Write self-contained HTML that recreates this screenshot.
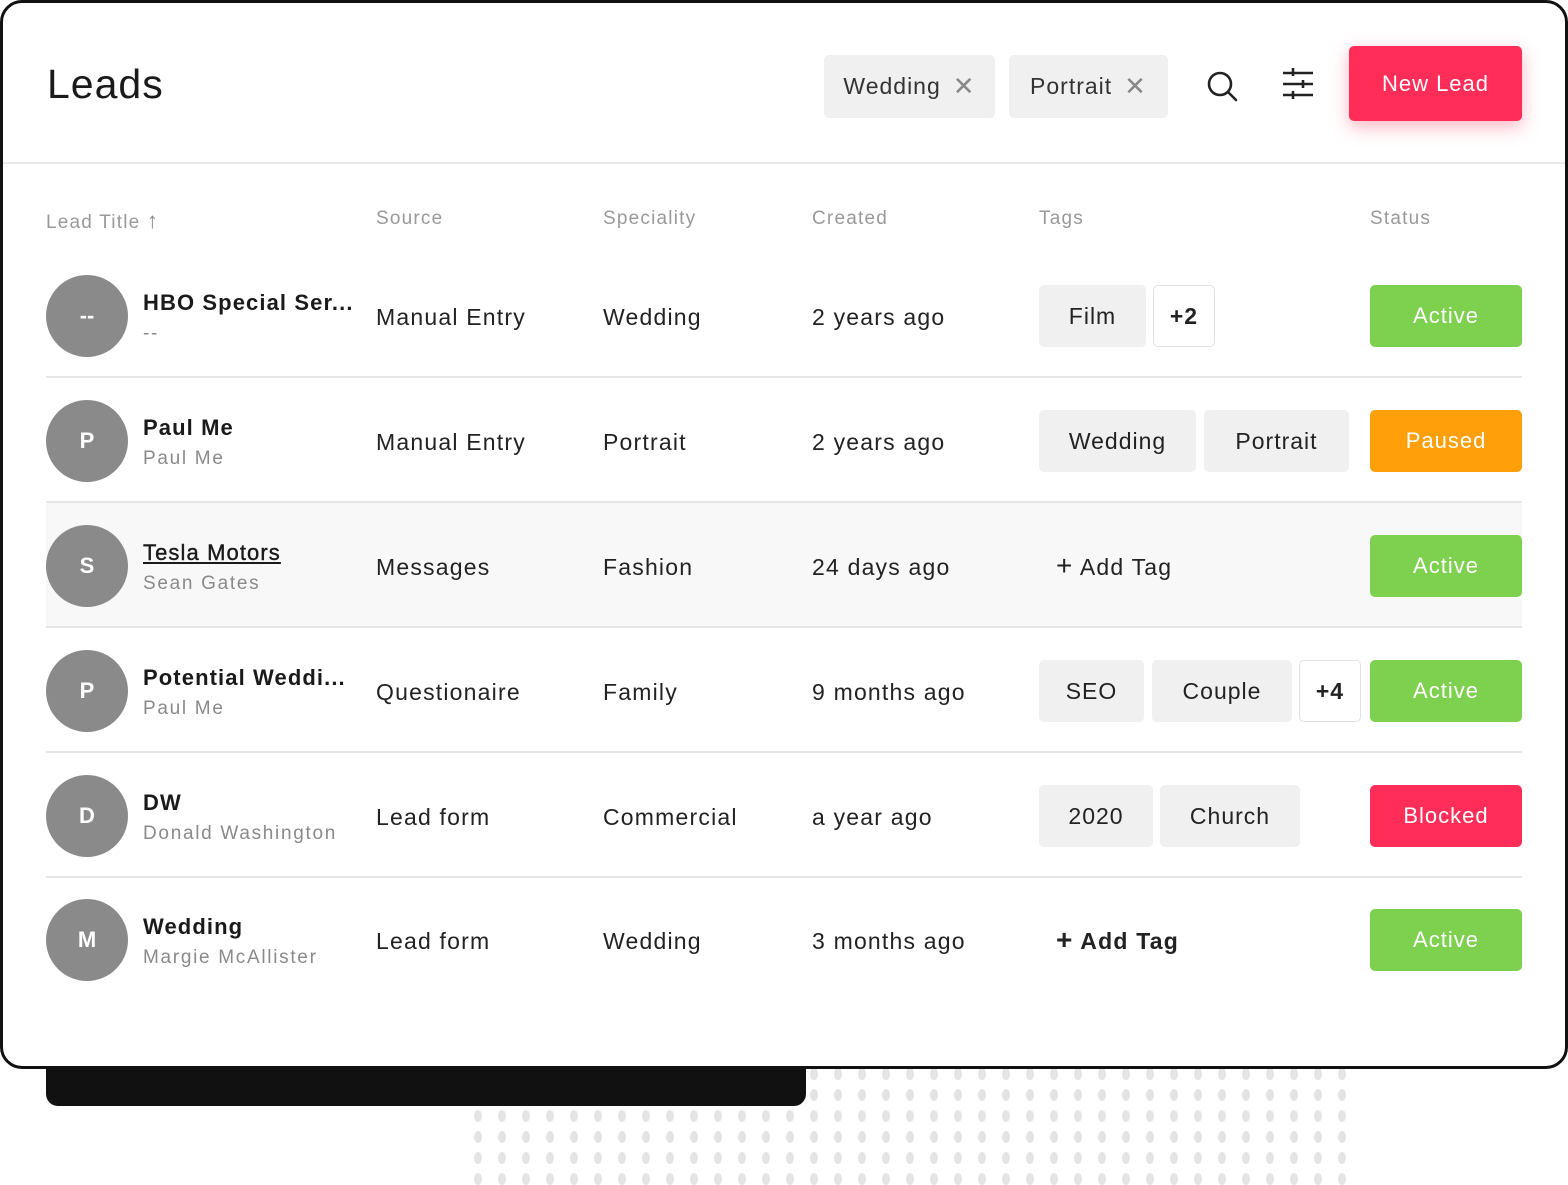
<!DOCTYPE html>
<html><head><meta charset="utf-8"><style>
*{margin:0;padding:0;box-sizing:border-box}
body{width:1568px;height:1185px;background:#fff;position:relative;overflow:hidden;font-family:"Liberation Sans",sans-serif;color:#1a1a1a}
.a{position:absolute}
.card{left:0;top:0;width:1568px;height:1069px;border:3px solid #111;border-radius:22px;background:#fff;z-index:2}
.tab{left:46px;top:1060px;width:760px;height:46px;background:#111;border-radius:0 0 12px 12px;z-index:1}
.dot{position:absolute;width:8px;height:12px;border-radius:50%;background:#e4e4e4}
.chip{background:#f0f0f0;border-radius:5px;height:63px;top:52px;font-size:23px;color:#333;display:flex;align-items:center;justify-content:center;gap:12px;letter-spacing:1px}
.th{top:208px;font-size:19px;color:#999;letter-spacing:1.2px}
.av{width:82px;height:82px;border-radius:50%;background:#8a8a8a;color:#fff;font-weight:bold;font-size:22px;display:flex;align-items:center;justify-content:center;left:46px}
.nm{left:143px;font-size:22px;font-weight:bold;color:#1a1a1a;letter-spacing:1.1px}
.sb{left:143px;font-size:19px;color:#8a8a8a;letter-spacing:1.7px}
.cell{font-size:23px;color:#222;letter-spacing:1.2px}
.tag{height:62px;border-radius:5px;background:#f0f0f0;display:flex;align-items:center;justify-content:center;font-size:23px;color:#222;letter-spacing:1px}
.plus{background:#fff;border:1.5px solid #e2e2e2;font-weight:bold}
.st{left:1370px;width:152px;height:62px;border-radius:5px;color:#fff;font-size:22px;display:flex;align-items:center;justify-content:center;letter-spacing:1px}
.g{background:#7ed04f}.o{background:#ffa00a}.r{background:#ff2d57}
.hr{left:46px;width:1476px;height:2px;background:#e6e6e6}
</style></head><body>
<div id="dots"></div>
<div class="a tab"></div>
<div class="a card">
<div class="a" style="left:44px;top:58px;font-size:41px;color:#1a1a1a;letter-spacing:1px">Leads</div>
<div class="a chip" style="left:821px;width:171px">Wedding <span style="color:#888;font-size:26px">✕</span></div>
<div class="a chip" style="left:1006px;width:159px">Portrait <span style="color:#888;font-size:26px">✕</span></div>
<svg class="a" style="left:1201px;top:65px" width="36" height="36" viewBox="0 0 36 36" fill="none" stroke="#222" stroke-width="2.6"><circle cx="16" cy="16" r="11"/><line x1="24" y1="24" x2="32" y2="32" stroke-linecap="round"/></svg>
<svg class="a" style="left:1278px;top:64px" width="34" height="34" viewBox="0 0 34 34" stroke="#222" stroke-width="2.6"><line x1="2" y1="6" x2="32" y2="6"/><line x1="12" y1="1" x2="12" y2="9"/><line x1="2" y1="17" x2="32" y2="17"/><line x1="22" y1="13" x2="22" y2="21"/><line x1="2" y1="28" x2="32" y2="28"/><line x1="12" y1="24" x2="12" y2="32"/></svg>
<div class="a" style="left:1346px;top:43px;width:173px;height:75px;background:#ff2d57;border-radius:5px;color:#fff;font-size:22px;display:flex;align-items:center;justify-content:center;box-shadow:0 6px 18px rgba(255,45,87,.35);letter-spacing:1px">New Lead</div>
<div class="a" style="left:0;top:159px;width:1562px;height:2px;background:#e8e8e8"></div>
</div>
<div class="a" style="left:0;top:0;width:1568px;height:1069px;z-index:3">
<div class="a th" style="left:46px">Lead Title <span style="font-size:22px;font-weight:bold;color:#888">↑</span></div>
<div class="a th" style="left:376px">Source</div>
<div class="a th" style="left:603px">Speciality</div>
<div class="a th" style="left:812px">Created</div>
<div class="a th" style="left:1039px">Tags</div>
<div class="a th" style="left:1370px">Status</div>

<div class="a" style="left:46px;top:503px;width:1476px;height:124px;background:#f8f8f8"></div>
<div class="a hr" style="top:376px"></div>
<div class="a hr" style="top:501px"></div>
<div class="a hr" style="top:626px"></div>
<div class="a hr" style="top:751px"></div>
<div class="a hr" style="top:876px"></div>

<div class="a av" style="top:275px">--</div>
<div class="a nm" style="top:290px">HBO Special Ser...</div>
<div class="a sb" style="top:323px">--</div>
<div class="a cell" style="left:376px;top:304px">Manual Entry</div>
<div class="a cell" style="left:603px;top:304px">Wedding</div>
<div class="a cell" style="left:812px;top:304px">2 years ago</div>
<div class="a tag" style="left:1039px;top:285px;width:107px">Film</div>
<div class="a tag plus" style="left:1153px;top:285px;width:62px">+2</div>
<div class="a st g" style="top:285px">Active</div>

<div class="a av" style="top:400px">P</div>
<div class="a nm" style="top:415px">Paul Me</div>
<div class="a sb" style="top:448px">Paul Me</div>
<div class="a cell" style="left:376px;top:429px">Manual Entry</div>
<div class="a cell" style="left:603px;top:429px">Portrait</div>
<div class="a cell" style="left:812px;top:429px">2 years ago</div>
<div class="a tag" style="left:1039px;top:410px;width:157px">Wedding</div>
<div class="a tag" style="left:1204px;top:410px;width:145px">Portrait</div>
<div class="a st o" style="top:410px">Paused</div>

<div class="a av" style="top:525px">S</div>
<div class="a nm" style="top:540px;text-decoration:underline;font-weight:normal;-webkit-text-stroke:.4px #1a1a1a">Tesla Motors</div>
<div class="a sb" style="top:573px">Sean Gates</div>
<div class="a cell" style="left:376px;top:554px">Messages</div>
<div class="a cell" style="left:603px;top:554px">Fashion</div>
<div class="a cell" style="left:812px;top:554px">24 days ago</div>
<div class="a cell" style="left:1056px;top:554px"><span style="font-size:28px;line-height:22px">+</span> Add Tag</div>
<div class="a st g" style="top:535px">Active</div>

<div class="a av" style="top:650px">P</div>
<div class="a nm" style="top:665px">Potential Weddi...</div>
<div class="a sb" style="top:698px">Paul Me</div>
<div class="a cell" style="left:376px;top:679px">Questionaire</div>
<div class="a cell" style="left:603px;top:679px">Family</div>
<div class="a cell" style="left:812px;top:679px">9 months ago</div>
<div class="a tag" style="left:1039px;top:660px;width:105px">SEO</div>
<div class="a tag" style="left:1152px;top:660px;width:140px">Couple</div>
<div class="a tag plus" style="left:1299px;top:660px;width:62px">+4</div>
<div class="a st g" style="top:660px">Active</div>

<div class="a av" style="top:775px">D</div>
<div class="a nm" style="top:790px">DW</div>
<div class="a sb" style="top:823px">Donald Washington</div>
<div class="a cell" style="left:376px;top:804px">Lead form</div>
<div class="a cell" style="left:603px;top:804px">Commercial</div>
<div class="a cell" style="left:812px;top:804px">a year ago</div>
<div class="a tag" style="left:1039px;top:785px;width:114px">2020</div>
<div class="a tag" style="left:1160px;top:785px;width:140px">Church</div>
<div class="a st r" style="top:785px">Blocked</div>

<div class="a av" style="top:899px">M</div>
<div class="a nm" style="top:914px">Wedding</div>
<div class="a sb" style="top:947px">Margie McAllister</div>
<div class="a cell" style="left:376px;top:928px">Lead form</div>
<div class="a cell" style="left:603px;top:928px">Wedding</div>
<div class="a cell" style="left:812px;top:928px">3 months ago</div>
<div class="a cell" style="left:1056px;top:928px;font-weight:bold"><span style="font-size:28px;line-height:22px">+</span> Add Tag</div>
<div class="a st g" style="top:909px">Active</div>
</div>
<script>
var h='';var ys=[1068,1089,1110,1131,1152,1173];
for(var r=0;r<6;r++){for(var c=0;c<37;c++){var x=474+c*24;if(r<2&&x<810)continue;h+='<div class="dot" style="left:'+x+'px;top:'+ys[r]+'px"></div>';}}
document.getElementById('dots').innerHTML=h;
</script>
</body></html>
